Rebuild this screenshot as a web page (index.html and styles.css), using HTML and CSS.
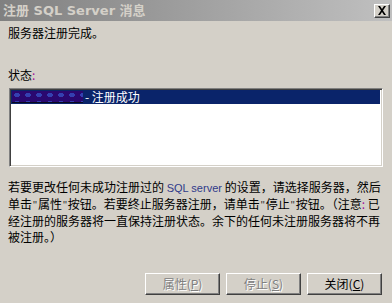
FILE: index.html
```
<!DOCTYPE html>
<html>
<head>
<meta charset="utf-8">
<link rel="stylesheet" href="styles.css">
</head>
<body>
<div class="window">
  <div class="titlebar">
    <span class="title">注册 SQL Server 消息</span>
    <span class="close"><svg width="10" height="9" viewBox="0 0 10 9"><path d="M1 0h2l2 3 2-3h2L6 4.5 9 9H7L5 6 3 9H1l3-4.5z" fill="#000"/></svg></span>
  </div>
  <div class="content">
    <div class="msg">服务器注册完成。</div>
    <div class="label">状态<span class="colon">:</span></div>
    <div class="listbox">
      <div class="row sel"><span class="blur"></span><span class="rtext">- 注册成功</span></div>
    </div>
    <div class="para">若要更改任何未成功注册过的 <span class="sql">SQL server</span> 的设置，请选择服务器，然后<br>单击<span class="q">"</span>属性<span class="q">"</span>按钮。若要终止服务器注册，请单击<span class="q">"</span>停止<span class="q">"</span>按钮。（注意<span class="colon">:</span> 已<br>经注册的服务器将一直保持注册状态。余下的任何未注册服务器将不再<br>被注册。）</div>
    <div class="buttons">
      <div class="btn disabled">属性(<u>P</u>)</div>
      <div class="btn disabled">停止(<u>S</u>)</div>
      <div class="btn">关闭(<u>C</u>)</div>
    </div>
  </div>
</div>
</body>
</html>
```
FILE: styles.css
```
html, body {
  margin: 0;
  padding: 0;
  background: #d4d0c8;
}
body {
  width: 392px;
  height: 303px;
  overflow: hidden;
  font-family: "Noto Sans CJK SC", "Liberation Sans", sans-serif;
  font-size: 12px;
  color: #000;
}
.window {
  width: 392px;
  height: 303px;
  display: flex;
  flex-direction: column;
}
.titlebar {
  height: 21px;
  background: linear-gradient(to right, #808080, #c0c0c0);
  display: flex;
  align-items: center;
  justify-content: space-between;
  padding: 0 2px 0 3px;
  flex-shrink: 0;
}
.title {
  color: #d4d0c8;
  font-weight: bold;
  font-family: "DejaVu Sans", "Noto Sans CJK SC", sans-serif;
  font-size: 13px;
  line-height: 21px;
}
.close {
  width: 16px;
  height: 14px;
  background: #d4d0c8;
  box-sizing: border-box;
  border-top: 1px solid #fff;
  border-left: 1px solid #fff;
  border-right: 1px solid #404040;
  border-bottom: 1px solid #404040;
  box-shadow: inset -1px -1px 0 #808080;
  display: flex;
  align-items: center;
  justify-content: center;
}
.content {
  padding: 0 9px 0 8px;
  display: flex;
  flex-direction: column;
}
.msg {
  margin-top: 4px;
  line-height: 16px;
}
.label {
  margin-top: 26px;
  line-height: 16px;
}
.colon {
  color: #a0109a;
}
.listbox {
  margin-top: 5px;
  margin-left: 1px;
  height: 79px;
  background: #fff;
  box-sizing: border-box;
  border-top: 1px solid #808080;
  border-left: 1px solid #808080;
  border-right: 1px solid #fff;
  border-bottom: 1px solid #fff;
  box-shadow: inset 1px 1px 0 #404040, inset -1px -1px 0 #d4d0c8;
  padding: 1px 2px 2px 1px;
}
.row {
  height: 14px;
  display: flex;
  align-items: center;
}
.sel {
  background: #0a246a;
  color: #fff;
}
.blur {
  width: 71px;
  height: 12px;
  margin-left: 1px;
  background-color: #2a0870;
  background-image: radial-gradient(ellipse 3px 2.5px at 5px 4px, #3440b0 90%, #2a0870 100%);
  background-size: 11px 8px;
  border-bottom: 1px solid #0a0a20;
  box-sizing: border-box;
}
.rtext {
  margin-left: 2px;
  line-height: 14px;
}
.para {
  margin-top: 12px;
  line-height: 16px;
  white-space: nowrap;
}
.sql {
  color: #303a8a;
  font-family: "Liberation Sans", sans-serif;
  font-size: 11px;
}
.q {
  font-family: "Liberation Sans", sans-serif;
  font-size: 11px;
  color: #333;
  padding: 0 1px;
}
.buttons {
  margin-top: 28px;
  display: flex;
  justify-content: flex-end;
  gap: 6px;
  padding-right: 1px;
}
.btn {
  width: 75px;
  height: 22px;
  box-sizing: border-box;
  background: #d4d0c8;
  border-top: 1px solid #fff;
  border-left: 1px solid #fff;
  border-right: 1px solid #404040;
  border-bottom: 1px solid #404040;
  box-shadow: inset -1px -1px 0 #808080;
  display: flex;
  align-items: center;
  justify-content: center;
  line-height: 20px;
}
.btn.disabled {
  color: #808080;
  text-shadow: 1px 1px 0 #fff;
}
```
